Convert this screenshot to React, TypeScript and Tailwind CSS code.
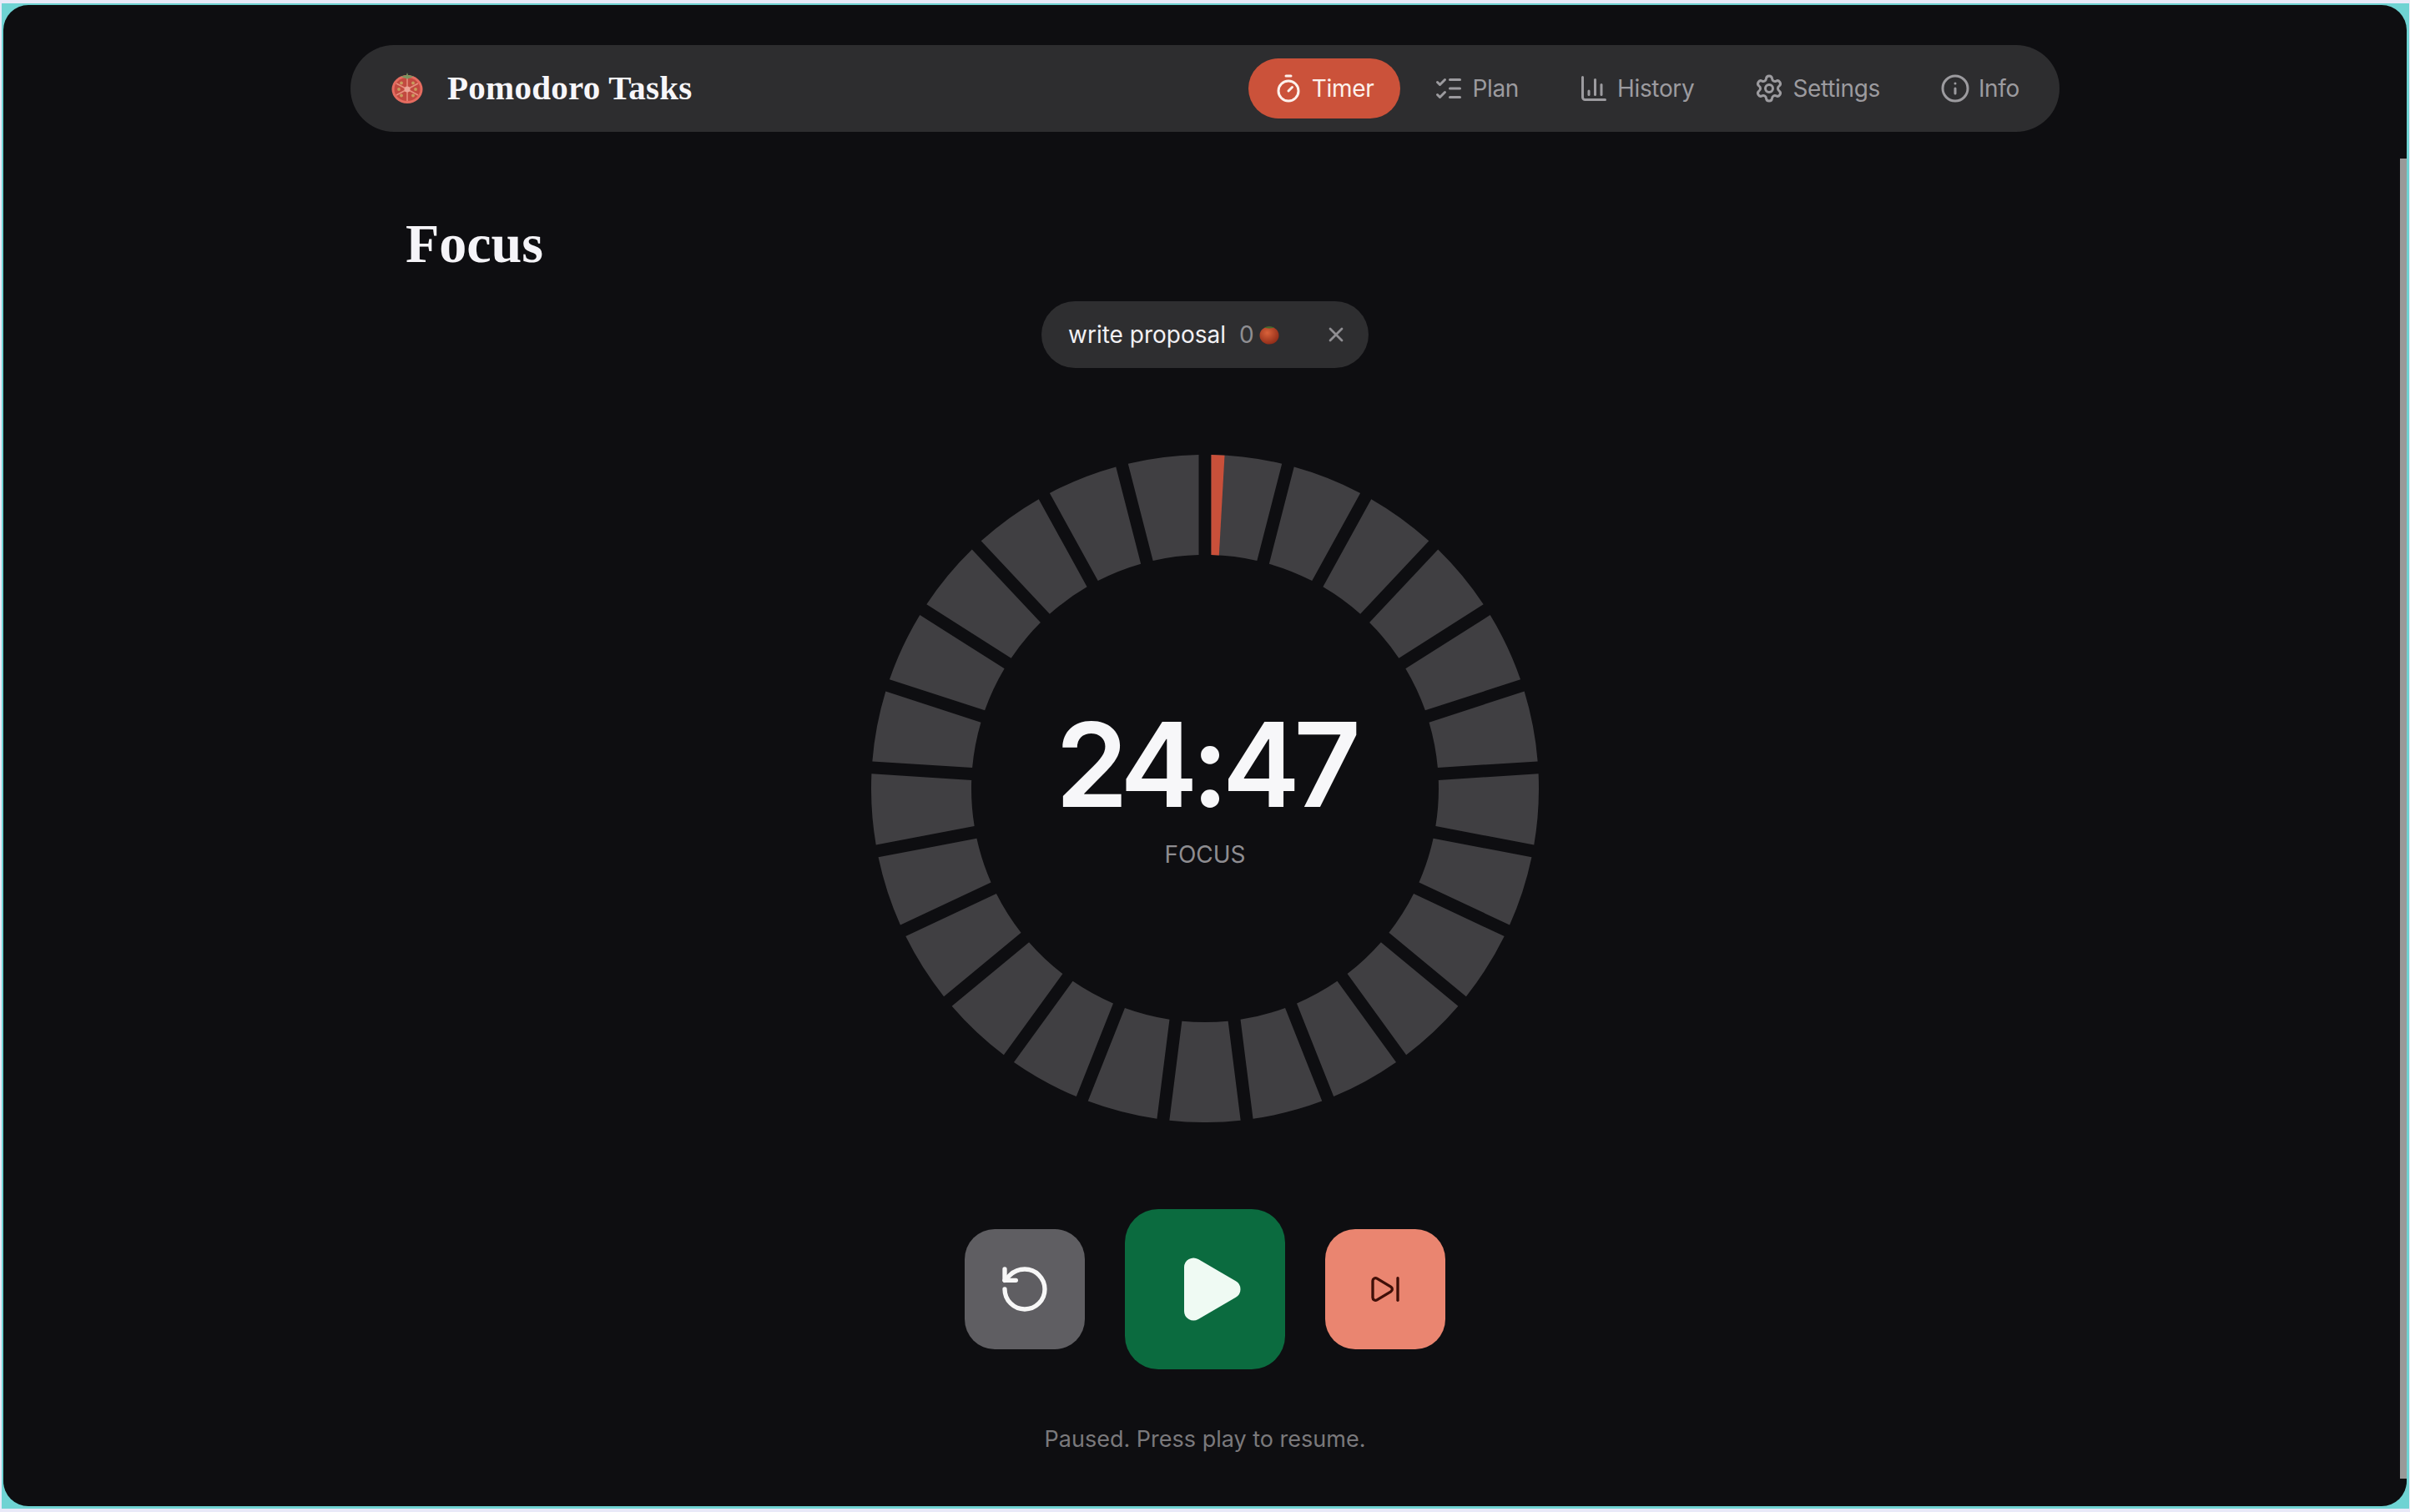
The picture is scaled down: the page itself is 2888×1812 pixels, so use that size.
import { ChartColumn, Info, ListChecks, Play, RotateCcw, Settings, SkipForward, Timer, X } from 'lucide-react'

const navItems = [
  { label: 'Timer', icon: Timer, active: true },
  { label: 'Plan', icon: ListChecks, active: false },
  { label: 'History', icon: ChartColumn, active: false },
  { label: 'Settings', icon: Settings, active: false },
  { label: 'Info', icon: Info, active: false },
]

const SEGMENTS = 25
const OUTER = 400
const INNER = 280
const GAP = 15

function polar(r: number, deg: number) {
  const a = (deg * Math.PI) / 180
  return `${(r * Math.sin(a)).toFixed(2)} ${(-r * Math.cos(a)).toFixed(2)}`
}

function segmentPath(i: number) {
  const step = 360 / SEGMENTS
  const a0 = i * step
  const a1 = (i + 1) * step
  const dOuter = (Math.asin(GAP / 2 / OUTER) * 180) / Math.PI
  const dInner = (Math.asin(GAP / 2 / INNER) * 180) / Math.PI
  return `M${polar(OUTER, a0 + dOuter)} A${OUTER} ${OUTER} 0 0 1 ${polar(OUTER, a1 - dOuter)} L${polar(INNER, a1 - dInner)} A${INNER} ${INNER} 0 0 0 ${polar(INNER, a0 + dInner)} Z`
}

function Ring() {
  return (
    <svg viewBox="-400 -400 800 800" className="w-[800px] h-[800px]">
      {Array.from({ length: SEGMENTS }, (_, i) => (
        <path key={i} d={segmentPath(i)} fill="#403f42" />
      ))}
      <path d="M7.5 -400 L23.5 -399.3 L16.8 -279.5 L7.5 -280 Z" fill="#c9503a" />
    </svg>
  )
}

function LogoTomato() {
  return (
    <svg viewBox="0 0 38 38" className="w-[38px] h-[38px] blur-[0.5px]">
      <ellipse cx="19" cy="20" rx="18.5" ry="17" fill="#e56c60" />
      <ellipse cx="19" cy="20" rx="15.5" ry="14" fill="#c24a40" />
      <g stroke="#e8907f" strokeWidth="1.5">
        <path d="M19 6v28M6 13l26 14M32 13L6 27" />
      </g>
      <g fill="#c79c5c">
        <circle cx="12" cy="12.5" r="1.9" />
        <circle cx="26" cy="12.5" r="1.9" />
        <circle cx="9" cy="20" r="1.9" />
        <circle cx="29" cy="20" r="1.9" />
        <circle cx="12" cy="27.5" r="1.9" />
        <circle cx="26" cy="27.5" r="1.9" />
      </g>
      <circle cx="19" cy="20" r="3.5" fill="#eca497" />
      <path d="M19 0l1.2 3.2L27 4.5l-5 2-3 1-3-1-5-2 6.8-1.3z" fill="#7b9561" />
    </svg>
  )
}

function SmallTomato() {
  return (
    <svg viewBox="0 0 24 24" className="w-[24px] h-[24px]">
      <defs>
        <radialGradient id="tom" cx="0.4" cy="0.35" r="0.7">
          <stop offset="0" stopColor="#d9623a" />
          <stop offset="1" stopColor="#8e2a17" />
        </radialGradient>
      </defs>
      <ellipse cx="12" cy="13" rx="11.5" ry="10.5" fill="url(#tom)" />
      <path d="M6 3.5 Q12 1 18 3.5 Q12 5.5 6 3.5z" fill="#3f6b2c" />
    </svg>
  )
}

export default function App() {
  return (
    <div className="w-[2888px] h-[1812px] bg-[#e9e9f8] pl-[2px] pr-[1px] pt-[4px] pb-[4px] font-['Inter',sans-serif]">
      <div className="h-full bg-[#6fd3d3] pl-[2px] pr-[3px] pt-[2px] pb-[3px]">
        <div className="relative h-full bg-[#0e0e11] rounded-[30px] overflow-hidden flex flex-col items-center">
          <nav className="mt-[48px] w-[2048px] h-[104px] shrink-0 rounded-[52px] bg-[#2d2d2f] flex items-center justify-between pl-[49px] pr-[16px]">
            <div className="flex items-center gap-[29px]">
              <LogoTomato />
              <span className="font-['Liberation_Serif',serif] font-bold text-[41px] tracking-[0.0065em] text-[#f7f6f9]">Pomodoro Tasks</span>
            </div>
            <div className="flex items-center gap-[10px]">
              {navItems.map((item) => (
                <div
                  key={item.label}
                  className={`h-[72px] flex items-center gap-[10px] pl-[30px] pr-[32px] rounded-[36px] text-[28px] tracking-[-0.012em] ${
                    item.active ? 'bg-[#cb523a] text-[#fdf1ec]' : 'text-[#9c9b9f]'
                  }`}
                >
                  <item.icon className="w-[36px] h-[36px]" strokeWidth={2} />
                  <span>{item.label}</span>
                </div>
              ))}
            </div>
          </nav>

          <div className="w-[1916px] mt-[94px]">
            <h1 className="font-['Liberation_Serif',serif] font-bold text-[66px] leading-[80px] text-[#f5f4f8]">Focus</h1>
          </div>

          <div className="mt-[29px] w-[392px] h-[80px] rounded-[40px] bg-[#2e2e30] flex items-center pl-[32px] pr-[25px]">
            <span className="text-[28px] text-[#f2f1f4]">write proposal</span>
            <span className="ml-[16px] text-[28px] text-[#8f8e92]">0</span>
            <span className="ml-[6px]"><SmallTomato /></span>
            <X className="ml-auto w-[28px] h-[28px] text-[#8f8e92]" strokeWidth={2.4} />
          </div>

          <div className="relative mt-[104px] w-[800px] h-[800px]">
            <Ring />
            <div className="absolute inset-0 flex flex-col items-center justify-center pb-[7px]">
              <div className="text-[140px] leading-[150px] font-semibold tracking-[-0.055em] text-[#f7f7f9]">24:47</div>
              <div className="text-[28px] leading-[36px] mt-[15px] text-[#8e8d91]">FOCUS</div>
            </div>
          </div>

          <div className="mt-[104px] flex items-center gap-[48px]">
            <button className="w-[144px] h-[144px] rounded-[36px] bg-[#5f5e62] flex items-center justify-center">
              <RotateCcw className="w-[64px] h-[64px] text-[#f7f7f7]" strokeWidth={2} />
            </button>
            <button className="w-[192px] h-[192px] rounded-[40px] bg-[#0b6b3f] flex items-center justify-center">
              <Play className="w-[90px] h-[90px] text-[#effaf3] translate-x-[5px]" fill="#effaf3" strokeWidth={2} />
            </button>
            <button className="w-[144px] h-[144px] rounded-[36px] bg-[#ea8570] flex items-center justify-center">
              <SkipForward className="w-[40px] h-[40px] text-[#3f0f08]" strokeWidth={2} />
            </button>
          </div>

          <p className="mt-[64px] text-[27px] text-[#7a797c]">Paused. Press play to resume.</p>

          <div className="absolute right-0 top-[184px] w-[8px] h-[1582px] bg-[#999999]" />
        </div>
      </div>
    </div>
  )
}
